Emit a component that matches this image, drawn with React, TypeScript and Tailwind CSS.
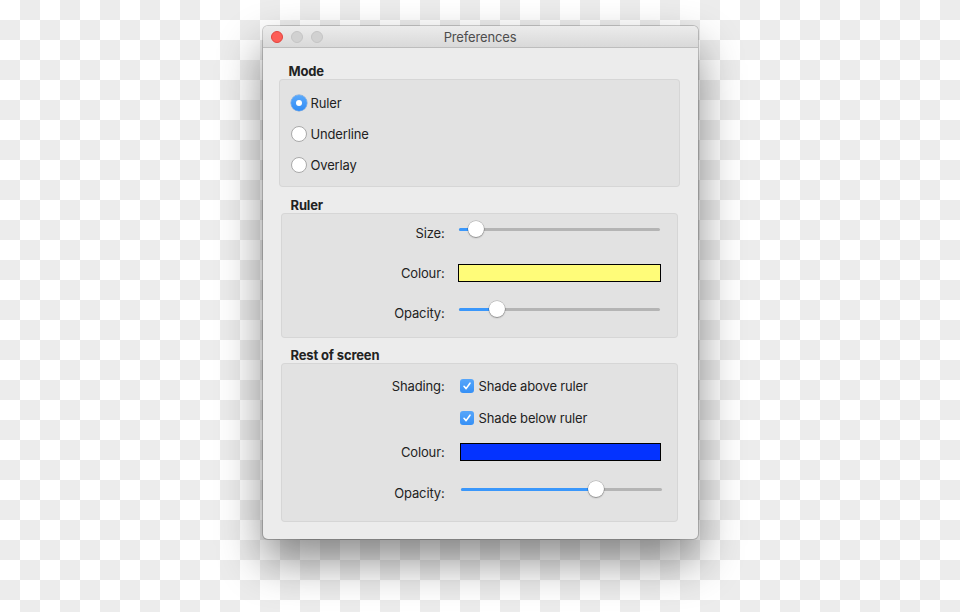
const Radio = ({ checked, label }: { checked?: boolean; label: string }) => (
  <div className="flex h-[31px] items-center">
    {checked ? (
      <div className="flex h-[16px] w-[16px] items-center justify-center rounded-full bg-gradient-to-b from-[#5aa9fb] to-[#2f8cf5] shadow-[0_0_0_0.5px_rgba(0,90,200,0.5)]">
        <div className="h-[6px] w-[6px] rounded-full bg-white" />
      </div>
    ) : (
      <div className="h-[16px] w-[16px] rounded-full border border-[#a9a9a9] bg-white" />
    )}
    <span className="ml-[4px]">{label}</span>
  </div>
);

const Slider = ({ value }: { value: number }) => (
  <div className="relative mb-[8px] h-[16px] w-[201px]">
    <div className="absolute left-0 right-0 top-[6.5px] h-[3px] rounded-full bg-[#b4b4b4]" />
    <div
      className="absolute left-0 top-[6.5px] h-[3px] rounded-full bg-[#3a97fb]"
      style={{ width: `${8 + value * 185}px` }}
    />
    <div
      className="absolute top-0 h-[16px] w-[16px] rounded-full bg-white shadow-[0_0_0_0.5px_rgba(0,0,0,0.25),0_1px_1.5px_rgba(0,0,0,0.3)]"
      style={{ left: `${value * 185}px` }}
    />
  </div>
);

const Check = ({ label }: { label: string }) => (
  <div className="flex items-center">
    <div className="flex h-[14px] w-[14px] items-center justify-center rounded-[3px] bg-gradient-to-b from-[#56a6fa] to-[#3590f6]">
      <svg width="10" height="10" viewBox="0 0 10 10">
        <path d="M2 5.3 L4.1 7.6 L8 2.2" fill="none" stroke="white" strokeWidth="1.6" strokeLinecap="round" strokeLinejoin="round" />
      </svg>
    </div>
    <span className="ml-[5px]">{label}</span>
  </div>
);

const Row = ({ label, h, children }: { label?: string; h: string; children: React.ReactNode }) => (
  <div className={`flex items-center ${h}`}>
    <div className="w-[163px] text-right">{label}</div>
    <div className="ml-[13px]">{children}</div>
  </div>
);

export default function App() {
  return (
    <div
      className="flex h-[612px] w-[960px] justify-center bg-[repeating-conic-gradient(#ececec_0_25%,#ffffff_0_50%)] bg-[length:40px_40px] pt-[26px] text-[13px] leading-[16px] tracking-[-0.15px] text-[#222]"
      style={{ fontFamily: "Inter, 'Noto Sans', sans-serif" }}
    >
      <div className="h-[513px] w-[435px] overflow-hidden rounded-[5px] bg-[#ececec] shadow-[0_22px_45px_rgba(0,0,0,0.45),0_0_0_1px_rgba(0,0,0,0.18)]">
        {/* title bar */}
        <div className="relative flex h-[22px] items-center justify-center border-b border-[#bdbdbd] bg-gradient-to-b from-[#ececec] to-[#d9d9d9]">
          <div className="absolute left-[8px] top-[5px] flex gap-[8px]">
            <div className="h-[12px] w-[12px] rounded-full border border-[#e0443e] bg-[#fd5e57]" />
            <div className="h-[12px] w-[12px] rounded-full border border-[#c4c4c4] bg-[#d1d1d1]" />
            <div className="h-[12px] w-[12px] rounded-full border border-[#c4c4c4] bg-[#d1d1d1]" />
          </div>
          <span className="text-[#4d4d4d]">Preferences</span>
        </div>

        <div className="pl-[16px] pr-[18px]">
          <div className="ml-[10px] mt-[15px] font-bold">Mode</div>
          <div className="h-[108px] rounded-[4px] border border-black/5 bg-[#e2e2e2] pl-[11px] pt-[7px]">
            <Radio checked label="Ruler" />
            <Radio label="Underline" />
            <Radio label="Overlay" />
          </div>

          <div className="ml-[12px] mt-[10px] font-bold">Ruler</div>
          <div className="mx-[2px] flex h-[125px] flex-col gap-[2px] rounded-[4px] border border-black/5 bg-[#e2e2e2]">
            <Row label="Size:" h="h-[38px]">
              <div className="ml-[1px]">
                <Slider value={0.05} />
              </div>
            </Row>
            <Row label="Colour:" h="h-[38px]">
              <div className="h-[18px] w-[203px] border border-black bg-[#fffc79]" />
            </Row>
            <Row label="Opacity:" h="h-[38px]">
              <div className="ml-[1px]">
                <Slider value={0.165} />
              </div>
            </Row>
          </div>

          <div className="ml-[12px] mt-[9px] font-bold">Rest of screen</div>
          <div className="mx-[2px] h-[159px] rounded-[4px] border border-black/5 bg-[#e2e2e2] pt-[6px]">
            <Row label="Shading:" h="h-[32px]">
              <div className="ml-[2px]">
                <Check label="Shade above ruler" />
              </div>
            </Row>
            <Row h="h-[32px]">
              <div className="ml-[2px]">
                <Check label="Shade below ruler" />
              </div>
            </Row>
            <Row label="Colour:" h="h-[36px]">
              <div className="ml-[2px] h-[18px] w-[201px] border border-black bg-[#0433ff]" />
            </Row>
            <Row label="Opacity:" h="h-[46px]">
              <div className="ml-[3px]">
                <Slider value={0.69} />
              </div>
            </Row>
          </div>
        </div>
      </div>
    </div>
  );
}
